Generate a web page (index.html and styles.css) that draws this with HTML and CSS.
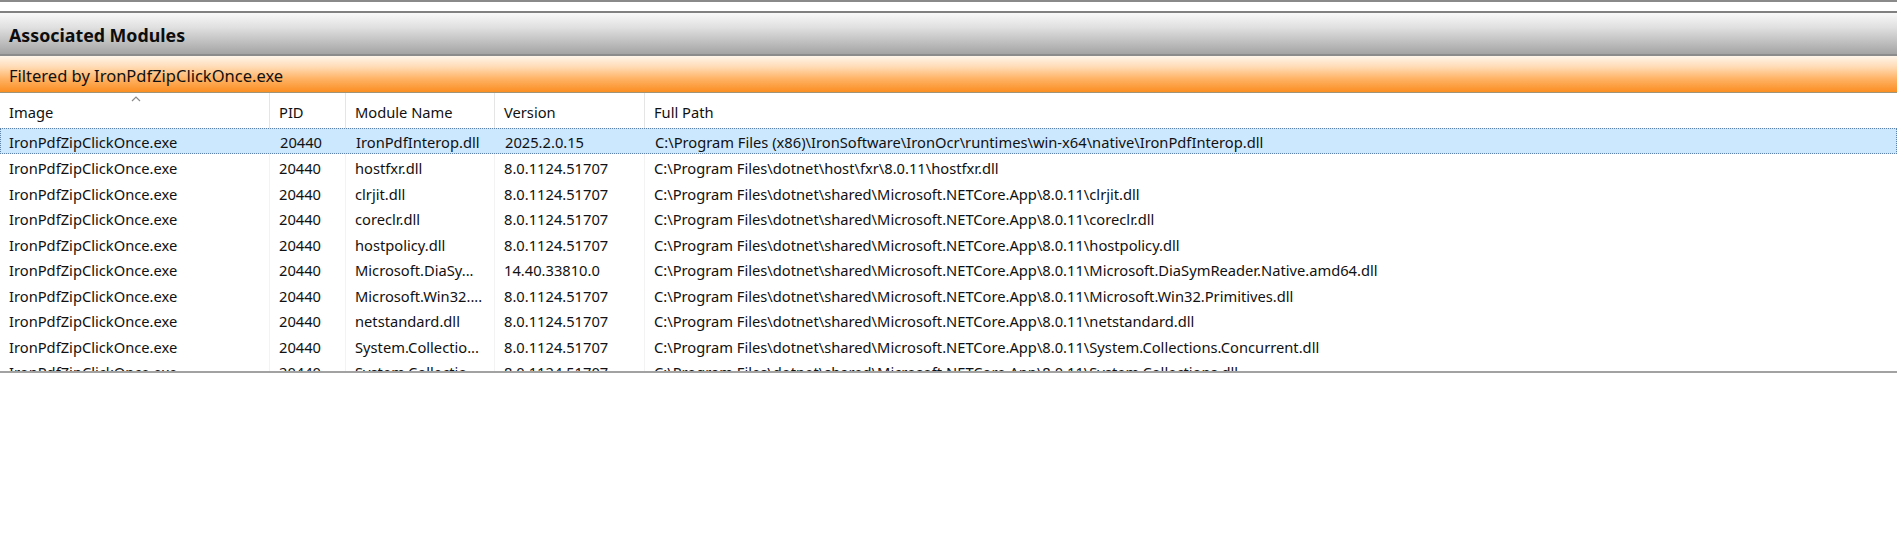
FILE: index.html
```html
<!DOCTYPE html>
<html lang="en">
<head>
  <meta charset="UTF-8">
  <title>Associated Modules</title>
  <link rel="stylesheet" href="styles.css">
</head>
<body>
  <div class="window-edge"></div>

  <div class="panel-title">Associated Modules</div>
  <div class="filter-bar">Filtered by IronPdfZipClickOnce.exe</div>

  <div class="grid">
    <div class="grid-head">
      <div class="cell sorted">Image<span class="sort-arrow"><svg width="10" height="6" viewBox="0 0 10 6"><polyline points="1,5 5,1 9,5" fill="none" stroke="#8a8a8a" stroke-width="1.2"/></svg></span></div>
      <div class="cell">PID</div>
      <div class="cell">Module Name</div>
      <div class="cell">Version</div>
      <div class="cell">Full Path</div>
    </div>

    <div class="grid-body">
      <div class="row selected">
        <div class="cell">IronPdfZipClickOnce.exe</div>
        <div class="cell">20440</div>
        <div class="cell">IronPdfInterop.dll</div>
        <div class="cell">2025.2.0.15</div>
        <div class="cell">C:\Program Files (x86)\IronSoftware\IronOcr\runtimes\win-x64\native\IronPdfInterop.dll</div>
      </div>
      <div class="row">
        <div class="cell">IronPdfZipClickOnce.exe</div>
        <div class="cell">20440</div>
        <div class="cell">hostfxr.dll</div>
        <div class="cell">8.0.1124.51707</div>
        <div class="cell">C:\Program Files\dotnet\host\fxr\8.0.11\hostfxr.dll</div>
      </div>
      <div class="row">
        <div class="cell">IronPdfZipClickOnce.exe</div>
        <div class="cell">20440</div>
        <div class="cell">clrjit.dll</div>
        <div class="cell">8.0.1124.51707</div>
        <div class="cell">C:\Program Files\dotnet\shared\Microsoft.NETCore.App\8.0.11\clrjit.dll</div>
      </div>
      <div class="row">
        <div class="cell">IronPdfZipClickOnce.exe</div>
        <div class="cell">20440</div>
        <div class="cell">coreclr.dll</div>
        <div class="cell">8.0.1124.51707</div>
        <div class="cell">C:\Program Files\dotnet\shared\Microsoft.NETCore.App\8.0.11\coreclr.dll</div>
      </div>
      <div class="row">
        <div class="cell">IronPdfZipClickOnce.exe</div>
        <div class="cell">20440</div>
        <div class="cell">hostpolicy.dll</div>
        <div class="cell">8.0.1124.51707</div>
        <div class="cell">C:\Program Files\dotnet\shared\Microsoft.NETCore.App\8.0.11\hostpolicy.dll</div>
      </div>
      <div class="row">
        <div class="cell">IronPdfZipClickOnce.exe</div>
        <div class="cell">20440</div>
        <div class="cell">Microsoft.DiaSy...</div>
        <div class="cell">14.40.33810.0</div>
        <div class="cell">C:\Program Files\dotnet\shared\Microsoft.NETCore.App\8.0.11\Microsoft.DiaSymReader.Native.amd64.dll</div>
      </div>
      <div class="row">
        <div class="cell">IronPdfZipClickOnce.exe</div>
        <div class="cell">20440</div>
        <div class="cell">Microsoft.Win32....</div>
        <div class="cell">8.0.1124.51707</div>
        <div class="cell">C:\Program Files\dotnet\shared\Microsoft.NETCore.App\8.0.11\Microsoft.Win32.Primitives.dll</div>
      </div>
      <div class="row">
        <div class="cell">IronPdfZipClickOnce.exe</div>
        <div class="cell">20440</div>
        <div class="cell">netstandard.dll</div>
        <div class="cell">8.0.1124.51707</div>
        <div class="cell">C:\Program Files\dotnet\shared\Microsoft.NETCore.App\8.0.11\netstandard.dll</div>
      </div>
      <div class="row">
        <div class="cell">IronPdfZipClickOnce.exe</div>
        <div class="cell">20440</div>
        <div class="cell">System.Collectio...</div>
        <div class="cell">8.0.1124.51707</div>
        <div class="cell">C:\Program Files\dotnet\shared\Microsoft.NETCore.App\8.0.11\System.Collections.Concurrent.dll</div>
      </div>
      <div class="row">
        <div class="cell">IronPdfZipClickOnce.exe</div>
        <div class="cell">20440</div>
        <div class="cell">System.Collectio...</div>
        <div class="cell">8.0.1124.51707</div>
        <div class="cell">C:\Program Files\dotnet\shared\Microsoft.NETCore.App\8.0.11\System.Collections.dll</div>
      </div>
    </div>
  </div>
</body>
</html>
```

FILE: styles.css
```css
* {
  box-sizing: border-box;
}

body {
  margin: 0;
  background: #fff;
  font-family: 'Noto Sans', 'Open Sans', sans-serif;
  color: #111;
}

.window-edge {
  height: 11px;
  border-top: 2px solid #8a8a8a;
  background: #fff;
}

.panel-title {
  height: 45px;
  padding: 2px 0 0 9px;
  display: flex;
  align-items: center;
  font-size: 17.8px;
  font-weight: bold;
  color: #0d0d0d;
  border-top: 2px solid #808080;
  border-bottom: 2px solid #8c8c8c;
  background: linear-gradient(#f8f8f8 0%, #e0e0e0 35%, #c0c0c0 70%, #a4a4a4 100%);
}

.filter-bar {
  height: 37px;
  padding: 2px 0 0 9px;
  display: flex;
  align-items: center;
  font-size: 16.5px;
  color: #111;
  border-bottom: 1px solid #a09478;
  background: linear-gradient(#fff5ea 0%, #ffdcb6 30%, #ffb468 62%, #fb8e22 100%);
}

.grid-head,
.row {
  display: grid;
  grid-template-columns: 270px 76px 149px 150px 1fr;
  font-size: 14.7px;
}

.grid-head {
  height: 35px;
  background: #fff;
}

.grid-head .cell {
  padding-top: 2px;
  border-right: 1px solid #e5e5e5;
}

.grid-head .cell:last-child {
  border-right: none;
}

.cell {
  display: flex;
  align-items: center;
  padding-left: 9px;
  white-space: nowrap;
  overflow: hidden;
}

.sorted {
  position: relative;
}

.sort-arrow {
  position: absolute;
  top: 3px;
  left: 131px;
  line-height: 0;
}

.grid-body {
  height: 245px;
  overflow: hidden;
  border-bottom: 2px solid #a2a2a2;
}

.row {
  height: 25.5px;
}

.row .cell {
  padding-top: 4px;
  border-right: 1px solid #f3f3f3;
}

.row .cell:last-child {
  border-right: none;
}

.row.selected {
  background: #cce8ff;
  border: 1px dotted #5f82a8;
}

.row.selected .cell {
  padding-top: 2px;
  border-right-color: #cce8ff;
}

.row.selected .cell:first-child {
  padding-left: 8px;
}
```
